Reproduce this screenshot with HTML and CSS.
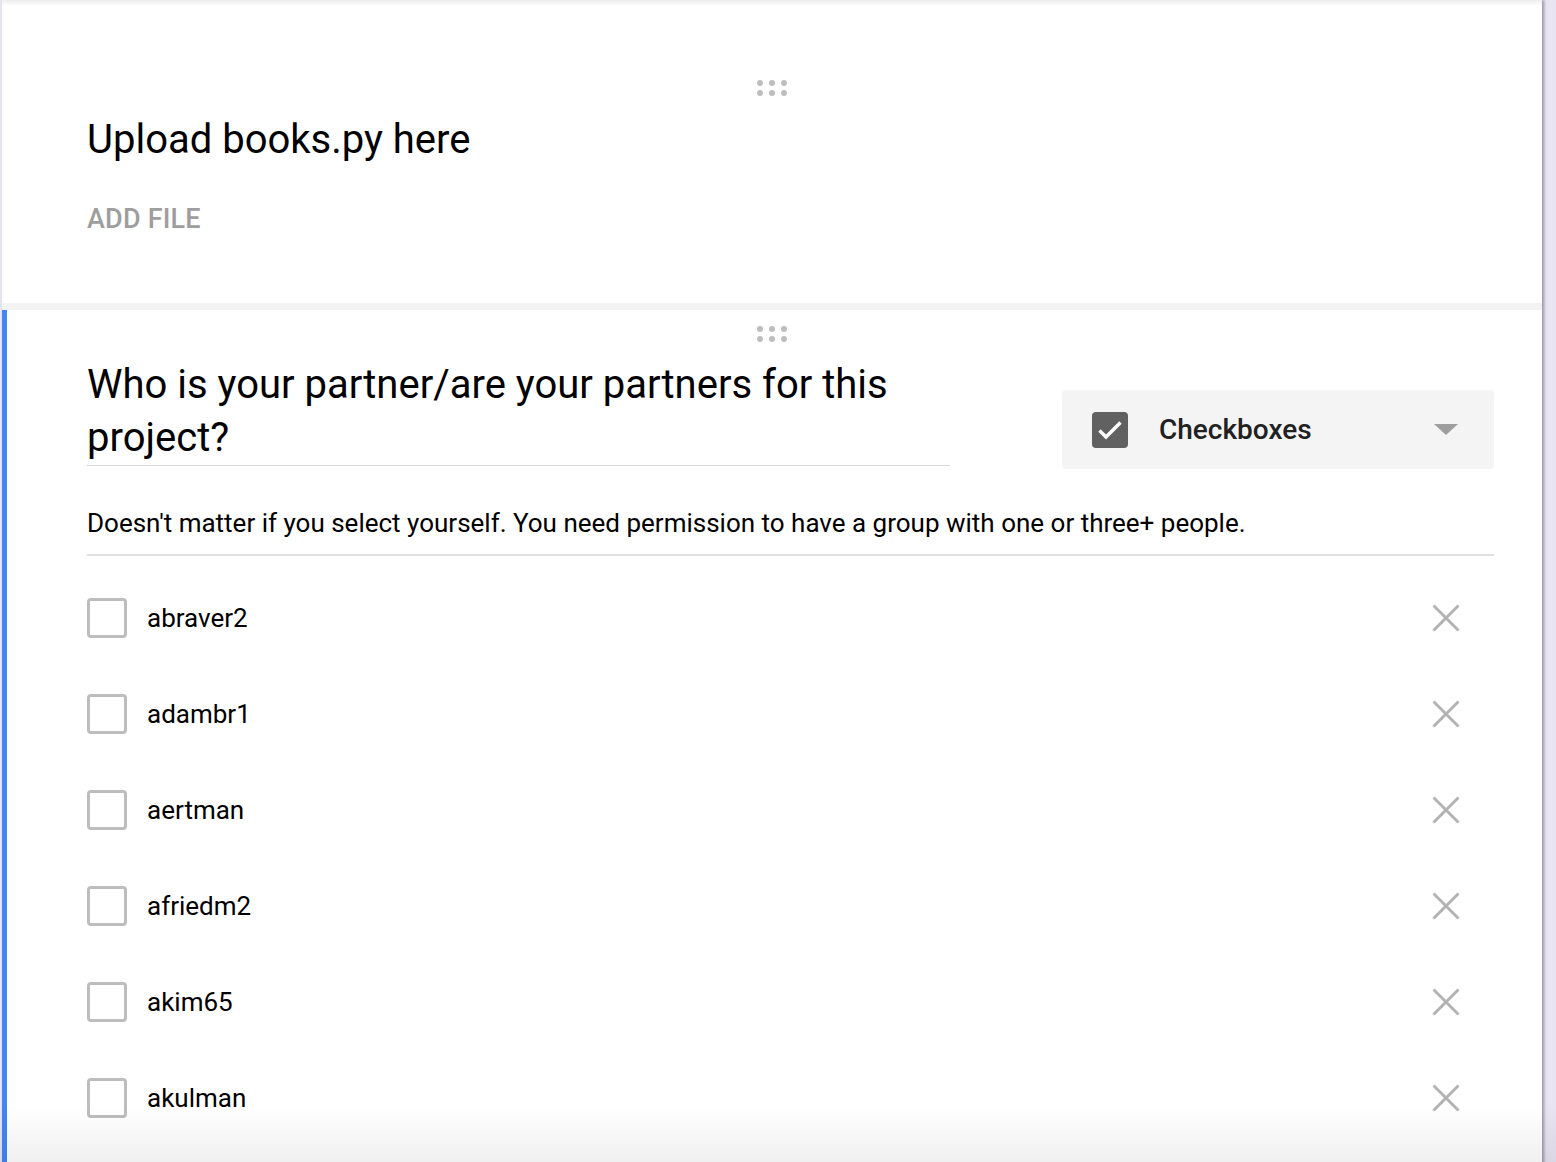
FILE: index.html
```html
<!DOCTYPE html>
<html lang="en">
<head>
<meta charset="utf-8">
<title>Form editor</title>
<link rel="stylesheet" href="styles.css">
</head>
<body>
<div class="page">
  <section class="card card-upload">
    <div class="drag"><span></span><span></span><span></span><span></span><span></span><span></span></div>
    <div class="card-body">
      <h2 class="q-title">Upload books.py here</h2>
      <div class="add-file">ADD FILE</div>
    </div>
  </section>

  <section class="card card-active">
    <div class="drag drag-2"><span></span><span></span><span></span><span></span><span></span><span></span></div>
    <div class="card-body">
      <div class="q-head">
        <div class="q-title-field">Who is your partner/are your partners for this project?</div>
        <div class="type-select">
          <svg class="type-icon" width="36" height="36" viewBox="0 0 36 36"><rect x="0" y="0" width="36" height="36" rx="4" fill="#616161"/><path d="M7.5 18.5 L14 25 L28.5 10.5" fill="none" stroke="#fff" stroke-width="3.4"/></svg>
          <span class="type-label">Checkboxes</span>
          <svg class="caret" width="24" height="11" viewBox="0 0 24 11"><path d="M0 0 L24 0 L12 11 Z" fill="#9e9e9e"/></svg>
        </div>
      </div>
      <div class="q-desc">Doesn't matter if you select yourself. You need permission to have a group with one or three+ people.</div>
      <ul class="options">
        <li class="option"><span class="box"></span><span class="opt-label">abraver2</span><svg class="remove" width="28" height="28" viewBox="0 0 28 28"><path d="M1.5 1.5 L26.5 26.5 M26.5 1.5 L1.5 26.5" stroke="#b3b3b3" stroke-width="3"/></svg></li>
        <li class="option"><span class="box"></span><span class="opt-label">adambr1</span><svg class="remove" width="28" height="28" viewBox="0 0 28 28"><path d="M1.5 1.5 L26.5 26.5 M26.5 1.5 L1.5 26.5" stroke="#b3b3b3" stroke-width="3"/></svg></li>
        <li class="option"><span class="box"></span><span class="opt-label">aertman</span><svg class="remove" width="28" height="28" viewBox="0 0 28 28"><path d="M1.5 1.5 L26.5 26.5 M26.5 1.5 L1.5 26.5" stroke="#b3b3b3" stroke-width="3"/></svg></li>
        <li class="option"><span class="box"></span><span class="opt-label">afriedm2</span><svg class="remove" width="28" height="28" viewBox="0 0 28 28"><path d="M1.5 1.5 L26.5 26.5 M26.5 1.5 L1.5 26.5" stroke="#b3b3b3" stroke-width="3"/></svg></li>
        <li class="option"><span class="box"></span><span class="opt-label">akim65</span><svg class="remove" width="28" height="28" viewBox="0 0 28 28"><path d="M1.5 1.5 L26.5 26.5 M26.5 1.5 L1.5 26.5" stroke="#b3b3b3" stroke-width="3"/></svg></li>
        <li class="option"><span class="box"></span><span class="opt-label">akulman</span><svg class="remove" width="28" height="28" viewBox="0 0 28 28"><path d="M1.5 1.5 L26.5 26.5 M26.5 1.5 L1.5 26.5" stroke="#b3b3b3" stroke-width="3"/></svg></li>
      </ul>
    </div>
  </section>
</div>
<div class="bottom-fade"></div>
</body>
</html>
```

FILE: styles.css
```css
html, body {
  margin: 0;
  padding: 0;
}
body {
  background: #e8e4f2;
  font-family: Roboto, "Noto Sans", Arial, sans-serif;
  color: #000;
  height: 1162px;
  overflow: hidden;
}
.page {
  width: 1540px;
  margin-left: 2px;
  box-shadow: 2px 0 3px rgba(0,0,0,0.35);
}
.card {
  background: #fff;
  position: relative;
}
.card-upload {
  height: 303px;
  background: linear-gradient(#ededed 0, #fff 6px);
}
.card-body {
  padding-left: 85px;
  padding-right: 48px;
}
.drag {
  width: 30px;
  display: grid;
  grid-template-columns: repeat(3, 6px);
  grid-auto-rows: 6px;
  column-gap: 6px;
  row-gap: 4px;
  margin: 0 auto;
  padding-top: 80px;
}
.drag span {
  width: 6px;
  height: 6px;
  border-radius: 50%;
  background: #bdbdbd;
}
.q-title {
  margin: 24px 0 0;
  font-weight: 400;
  font-size: 40px;
  line-height: 40px;
  color: #000;
}
.add-file {
  margin-top: 43px;
  font-size: 27px;
  line-height: 32px;
  font-weight: 500;
  color: #9e9e9e;
  letter-spacing: 0.2px;
}
.card-active {
  border-top: 7px solid transparent;
  border-image: linear-gradient(#f3f3f3, #cccccc) 1;
  height: 900px;
  box-shadow: inset 5px 0 0 #4285f4;
}
.card-active .drag {
  padding-top: 16px;
}
.q-head {
  display: flex;
  justify-content: space-between;
  align-items: flex-start;
  margin-top: 16px;
}
.q-title-field {
  width: 863px;
  font-size: 40px;
  line-height: 53px;
  padding-bottom: 1px;
  border-bottom: 1px solid #d9d9d9;
}
.type-select {
  width: 432px;
  height: 79px;
  margin-top: 32px;
  background: #f4f4f4;
  border-radius: 4px;
  display: flex;
  align-items: center;
  padding: 0 36px 0 30px;
  box-sizing: border-box;
}
.type-icon {
  flex: none;
}
.type-label {
  margin-left: 31px;
  font-size: 28px;
  font-weight: 500;
  color: #212121;
  flex: 1;
}
.caret {
  flex: none;
}
.q-desc {
  margin-top: 38px;
  font-size: 26px;
  line-height: 32px;
  padding-bottom: 15px;
  border-bottom: 2px solid #e0e0e0;
  color: #000;
}
.options {
  list-style: none;
  margin: 42px 0 0;
  padding: 0;
}
.option {
  display: flex;
  align-items: center;
  height: 40px;
  margin-bottom: 56px;
}
.box {
  width: 40px;
  height: 40px;
  box-sizing: border-box;
  border: 3px solid #bdbdbd;
  border-radius: 4px;
  flex: none;
}
.opt-label {
  margin-left: 20px;
  font-size: 26px;
  flex: 1;
}
.remove {
  flex: none;
  margin-right: 34px;
}
.bottom-fade {
  position: fixed;
  left: 0;
  right: 0;
  bottom: 0;
  height: 55px;
  background: linear-gradient(rgba(0,0,0,0), rgba(0,0,0,0.06));
  pointer-events: none;
}
```
